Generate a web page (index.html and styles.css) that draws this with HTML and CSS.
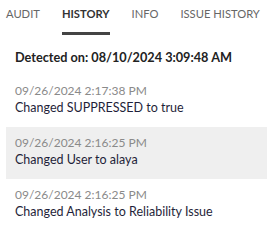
FILE: index.html
```html
<!DOCTYPE html>
<html lang="en">
    <head>
        <meta charset="utf-8">
        <link rel="stylesheet" href="styles.css">
    </head>
    <body>
        <div class="panel">
            <div class="tabs">
                <span class="tab">AUDIT</span>
                <span class="tab on">HISTORY</span>
                <span class="tab">INFO</span>
                <span class="tab">ISSUE HISTORY</span>
            </div>
            <div class="detected">Detected on: 08/10/2024 3:09:48 AM</div>
            <div class="history-list">
                <div class="entry">
                    <div class="entry-date">09/26/2024 2:17:38 PM</div>
                    <div class="entry-text">Changed SUPPRESSED to true</div>
                </div>
                <div class="entry hover">
                    <div class="entry-date">09/26/2024 2:16:25 PM</div>
                    <div class="entry-text">Changed User to alaya</div>
                </div>
                <div class="entry">
                    <div class="entry-date">09/26/2024 2:16:25 PM</div>
                    <div class="entry-text">Changed Analysis to Reliability Issue</div>
                </div>
            </div>
        </div>
    </body>
</html>
```

FILE: styles.css
```css
body {
    margin: 0;
    background: #fff;
    font-family: Lato, "Open Sans", sans-serif;
}
.panel {
    width: 267px;
}
.tabs {
    display: flex;
    gap: 22px;
    padding: 6px 0 0 6px;
    height: 30px;
    white-space: nowrap;
}
.tabs .tab {
    flex-shrink: 0;
    font-size: 11.2px;
    color: #666;
    line-height: 13px;
    padding-top: 1px;
    height: 28px;
    box-sizing: border-box;
}
.tabs .tab.on {
    color: #333;
    font-weight: bold;
    border-bottom: 3px solid #444;
    height: 29px;
}
.detected {
    font-size: 12.7px;
    font-weight: bold;
    color: #222;
    padding: 13px 0 0 15px;
    height: 26px;
}
.history-list {
    margin-left: 6px;
}
.entry {
    height: 52px;
    padding: 7px 0 0 9px;
    box-sizing: border-box;
}
.entry.hover {
    background: #efefef;
}
.entry-date {
    font-size: 12px;
    color: #8a8a8a;
    line-height: 17px;
}
.entry-text {
    font-size: 12.5px;
    color: #1f1f3a;
    line-height: 18px;
}
```
